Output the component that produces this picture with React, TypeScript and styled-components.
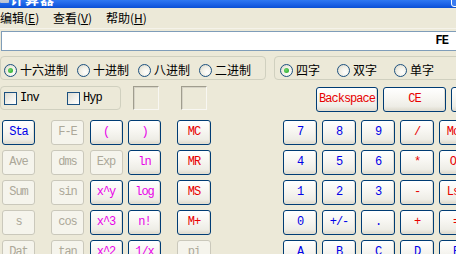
import React from "react";
import styled, { createGlobalStyle, css } from "styled-components";

const Global = createGlobalStyle`
  html, body { margin: 0; padding: 0; background: #ECE9D8; overflow: hidden; }
  #root { width: 456px; height: 254px; }
`;

const Window = styled.div`
  width: 456px;
  height: 254px;
  overflow: hidden;
  background: #ECE9D8;
  display: flex;
  flex-direction: column;
  font-family: "Noto Sans CJK SC", "Noto Sans", sans-serif;
  font-size: 12px;
  color: #000;
  & > * { flex-shrink: 0; }
`;

const TitleBar = styled.div`
  width: 472px;
  height: 8px;
  display: flex;
  align-items: flex-end;
  overflow: hidden;
  background: linear-gradient(180deg, #2E78F2 0%, #1B62E6 55%, #0A4FD4 100%);
`;

const TitleIcon = styled.div`
  width: 9px;
  height: 12px;
  margin: 0 0 5px 0;
  border-radius: 1px;
  background: linear-gradient(180deg, #E8E8E8, #B9C2D3);
`;

const TitleText = styled.div`
  margin: 0 0 2px 1px;
  line-height: 16px;
  font-size: 14px;
  font-weight: bold;
  letter-spacing: 1px;
  color: #FFFFFF;
  white-space: nowrap;
`;

const TitleButton = styled.div`
  margin: 0 0 1px auto;
  width: 21px;
  height: 21px;
  box-sizing: border-box;
  border: 1px solid #FFFFFF;
  border-radius: 3px;
  background: #3A7CF0;
`;

const MenuBar = styled.div`
  height: 20px;
  display: flex;
  align-items: center;
  border-bottom: 1px solid #F5F3EA;
`;

const MenuItem = styled.div`
  width: 53px;
  line-height: 14px;
  white-space: nowrap;
  font-size: 12px;
  & u { text-decoration: underline; }
`;

const Display = styled.div`
  margin: 2px 0 0 1px;
  width: 470px;
  height: 20px;
  box-sizing: border-box;
  border: 1px solid #7F9DB9;
  background: #FFFFFF;
  display: flex;
  align-items: center;
  justify-content: flex-end;
  padding-right: 22px;
  font-family: "Liberation Mono", monospace;
  font-weight: bold;
  font-size: 12px;
  letter-spacing: -1px;
`;

const Row = styled.div<{ $mt: number; $h: number }>`
  display: flex;
  align-items: flex-start;
  margin-top: ${(p) => p.$mt}px;
  height: ${(p) => p.$h}px;
  & > * { flex-shrink: 0; }
`;

const GroupBox = styled.div<{ $w: number; $ml?: number; $pl: number; $pt: number; $gap: number }>`
  box-sizing: border-box;
  width: ${(p) => p.$w}px;
  height: 24px;
  margin-left: ${(p) => p.$ml ?? 0}px;
  border: 1px solid #D0D0BF;
  border-radius: 4px;
  display: flex;
  align-items: center;
  padding: ${(p) => p.$pt}px 0 0 ${(p) => p.$pl}px;
  gap: ${(p) => p.$gap}px;
`;

const Option = styled.label<{ $w?: number }>`
  display: flex;
  align-items: center;
  gap: 3px;
  ${(p) => p.$w && css`width: ${p.$w}px;`}
  line-height: 14px;
  white-space: nowrap;
`;

const RadioCircle = styled.span<{ $on?: boolean }>`
  width: 13px;
  height: 13px;
  box-sizing: border-box;
  border: 1px solid #1C5180;
  border-radius: 50%;
  background: radial-gradient(circle at 65% 65%, #FFFFFF 0%, #F1EFE5 50%, #D3D0C2 100%);
  display: flex;
  align-items: center;
  justify-content: center;
  &::after {
    content: "";
    display: ${(p) => (p.$on ? "block" : "none")};
    width: 5px;
    height: 5px;
    border-radius: 50%;
    background: radial-gradient(circle at 40% 40%, #6DD86D, #21A121);
  }
`;

const CheckBox = styled.span`
  width: 13px;
  height: 13px;
  box-sizing: border-box;
  border: 1px solid #1C5180;
  background: linear-gradient(135deg, #DCDBD2 0%, #F4F3EE 60%, #FFFFFF 100%);
`;

const MonoLabel = styled.span`
  font-family: "Liberation Mono", monospace;
  font-size: 12px;
  letter-spacing: -1px;
`;

const Sunken = styled.div<{ $ml: number }>`
  box-sizing: border-box;
  width: 26px;
  height: 24px;
  margin-left: ${(p) => p.$ml}px;
  border-style: solid;
  border-width: 1px;
  border-color: #A09D8E #F8F7F2 #F8F7F2 #A09D8E;
  box-shadow: inset 1px 1px 0 #D6D3C6;
`;

type Tone = "blue" | "red" | "magenta";
const toneColor: Record<Tone, string> = {
  blue: "#0000E8",
  red: "#E80000",
  magenta: "#E800E8",
};

const Key = styled.button<{ $tone: Tone; $w?: number; $ml?: number; $mt?: number }>`
  box-sizing: border-box;
  width: ${(p) => (p.$w ? `${p.$w}px` : "100%")};
  height: 25px;
  margin: ${(p) => p.$mt ?? 0}px 0 0 ${(p) => p.$ml ?? 0}px;
  padding: 0;
  border: 1px solid #003C74;
  border-radius: 3px;
  background: linear-gradient(180deg, #FFFFFF 0%, #F8F7F3 40%, #EEEDE6 80%, #DCD8CB 100%);
  box-shadow: inset -1px -1px 0 #E2DED2;
  color: ${(p) => toneColor[p.$tone]};
  font-family: "Liberation Mono", monospace;
  font-size: 12px;
  letter-spacing: -1px;
  line-height: 23px;
  text-align: center;
  white-space: nowrap;
  &:disabled {
    border-color: #CAC8BB;
    background: #F5F4EC;
    box-shadow: none;
    color: #ACA899;
  }
`;

const Keypad = styled.div`
  display: flex;
  align-items: flex-start;
  margin-top: 9px;
  padding-left: 2px;
  & > * { flex-shrink: 0; }
`;

const KeyGrid = styled.div<{ $cols: number; $w: number; $gap: number; $ml: number }>`
  display: grid;
  grid-template-columns: repeat(${(p) => p.$cols}, ${(p) => p.$w}px);
  grid-auto-rows: 25px;
  column-gap: ${(p) => p.$gap}px;
  row-gap: 5px;
  margin-left: ${(p) => p.$ml}px;
`;

type K = { t: string; tone: Tone; off?: boolean };

const statKeys: K[] = [
  { t: "Sta", tone: "blue" },
  { t: "Ave", tone: "blue", off: true },
  { t: "Sum", tone: "blue", off: true },
  { t: "s", tone: "blue", off: true },
  { t: "Dat", tone: "blue", off: true },
];

const sciKeys: K[] = [
  { t: "F-E", tone: "blue", off: true },
  { t: "(", tone: "magenta" },
  { t: ")", tone: "magenta" },
  { t: "dms", tone: "blue", off: true },
  { t: "Exp", tone: "blue", off: true },
  { t: "ln", tone: "magenta" },
  { t: "sin", tone: "blue", off: true },
  { t: "x^y", tone: "magenta" },
  { t: "log", tone: "magenta" },
  { t: "cos", tone: "blue", off: true },
  { t: "x^3", tone: "magenta" },
  { t: "n!", tone: "magenta" },
  { t: "tan", tone: "blue", off: true },
  { t: "x^2", tone: "magenta" },
  { t: "1/x", tone: "magenta" },
];

const memKeys: K[] = [
  { t: "MC", tone: "red" },
  { t: "MR", tone: "red" },
  { t: "MS", tone: "red" },
  { t: "M+", tone: "red" },
  { t: "pi", tone: "blue", off: true },
];

const numKeys: K[] = [
  { t: "7", tone: "blue" }, { t: "8", tone: "blue" }, { t: "9", tone: "blue" },
  { t: "/", tone: "red" }, { t: "Mod", tone: "red" }, { t: "And", tone: "red" },
  { t: "4", tone: "blue" }, { t: "5", tone: "blue" }, { t: "6", tone: "blue" },
  { t: "*", tone: "red" }, { t: "Or", tone: "red" }, { t: "Xor", tone: "red" },
  { t: "1", tone: "blue" }, { t: "2", tone: "blue" }, { t: "3", tone: "blue" },
  { t: "-", tone: "red" }, { t: "Lsh", tone: "red" }, { t: "Not", tone: "red" },
  { t: "0", tone: "blue" }, { t: "+/-", tone: "blue" }, { t: ".", tone: "blue" },
  { t: "+", tone: "red" }, { t: "=", tone: "red" }, { t: "Int", tone: "red" },
  { t: "A", tone: "blue" }, { t: "B", tone: "blue" }, { t: "C", tone: "blue" },
  { t: "D", tone: "blue" }, { t: "E", tone: "blue" }, { t: "F", tone: "blue" },
];

const renderKeys = (keys: K[]) =>
  keys.map((k, i) => (
    <Key key={i} $tone={k.tone} disabled={k.off}>
      {k.t}
    </Key>
  ));

export default function App() {
  return (
    <>
      <Global />
      <Window>
        <TitleBar>
          <TitleIcon />
          <TitleText>计算器</TitleText>
          <TitleButton />
        </TitleBar>
        <MenuBar>
          <MenuItem>编辑(<u>E</u>)</MenuItem>
          <MenuItem>查看(<u>V</u>)</MenuItem>
          <MenuItem>帮助(<u>H</u>)</MenuItem>
        </MenuBar>
        <Display>FE</Display>
        <Row $mt={5} $h={24}>
          <GroupBox $w={266} $pl={3} $pt={4} $gap={9}>
            <Option><RadioCircle $on />十六进制</Option>
            <Option><RadioCircle />十进制</Option>
            <Option><RadioCircle />八进制</Option>
            <Option><RadioCircle />二进制</Option>
          </GroupBox>
          <GroupBox $w={220} $ml={8} $pl={5} $pt={4} $gap={17}>
            <Option><RadioCircle $on />四字</Option>
            <Option><RadioCircle />双字</Option>
            <Option><RadioCircle />单字</Option>
          </GroupBox>
        </Row>
        <Row $mt={6} $h={25}>
          <GroupBox $w={121} $pl={3} $pt={0} $gap={0}>
            <Option $w={63}><CheckBox /><MonoLabel>Inv</MonoLabel></Option>
            <Option><CheckBox /><MonoLabel>Hyp</MonoLabel></Option>
          </GroupBox>
          <Sunken $ml={12} />
          <Sunken $ml={22} />
          <Key $tone="red" $w={62} $ml={109} $mt={1}>Backspace</Key>
          <Key $tone="red" $w={63} $ml={5} $mt={1}>CE</Key>
          <Key $tone="red" $w={63} $ml={5} $mt={1}>C</Key>
        </Row>
        <Keypad>
          <KeyGrid $cols={1} $w={33} $gap={0} $ml={0}>{renderKeys(statKeys)}</KeyGrid>
          <KeyGrid $cols={3} $w={33} $gap={5.5} $ml={16}>{renderKeys(sciKeys)}</KeyGrid>
          <KeyGrid $cols={1} $w={34} $gap={0} $ml={16}>{renderKeys(memKeys)}</KeyGrid>
          <KeyGrid $cols={6} $w={34} $gap={5} $ml={72}>{renderKeys(numKeys)}</KeyGrid>
        </Keypad>
      </Window>
    </>
  );
}
